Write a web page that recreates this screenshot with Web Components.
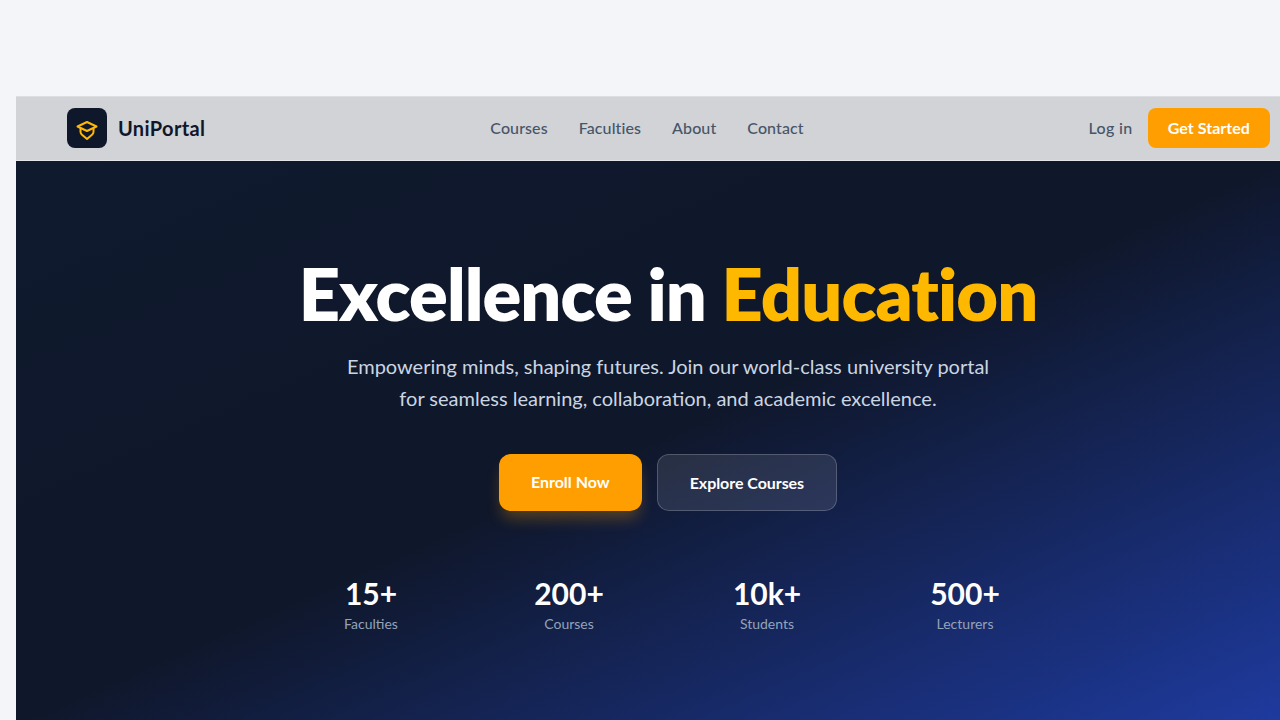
<!DOCTYPE html>
<html>
<head>
<meta charset="utf-8">
<title>UniPortal</title>
<style>
    html, body {
        margin: 0;
        height: 100%;
        overflow: hidden;
        background: #f3f5f9;
        font-family: "Lato", "Open Sans", sans-serif;
    }
    body {
        padding: 96px 0 0 16px;
        box-sizing: border-box;
    }
</style>
</head>
<body>
<uni-page>
    <site-nav></site-nav>
    <hero-section>
        <stat-item value="15+" label="Faculties"></stat-item>
        <stat-item value="200+" label="Courses"></stat-item>
        <stat-item value="10k+" label="Students"></stat-item>
        <stat-item value="500+" label="Lecturers"></stat-item>
    </hero-section>
</uni-page>
<script>
class UniPage extends HTMLElement {
    constructor() {
        super();
        this._shadowRoot = this.attachShadow({mode: 'open'});
        this._shadowRoot.innerHTML = `
            <style>
                :host {
                    display: flex;
                    flex-direction: column;
                    width: 1264px;
                    height: 624px;
                }
            </style>
            <slot></slot>
        `;
    }
}

class SiteNav extends HTMLElement {
    constructor() {
        super();
        this._shadowRoot = this.attachShadow({mode: 'open'});
        this._shadowRoot.innerHTML = `
            <style>
                * { box-sizing: border-box; }
                :host {
                    box-sizing: border-box;
                    display: grid;
                    grid-template-columns: 1fr auto 1fr;
                    align-items: center;
                    height: 65px;
                    padding: 0 10px 1px 51px;
                    background: #d1d3d7;
                    border-top: 1px solid #dcdee2;
                    border-bottom: 1px solid #e2e4e8;
                    flex: none;
                }
                .brand { display: flex; align-items: center; gap: 11px; }
                .logo {
                    width: 40px;
                    height: 40px;
                    border-radius: 8px;
                    background: #0f172a;
                    display: flex;
                    align-items: center;
                    justify-content: center;
                }
                .name { font-size: 20px; font-weight: 700; color: #0f172a; letter-spacing: .35px; padding-bottom: 1px; }
                nav { display: flex; gap: 31px; margin-left: -43px; }
                a { font-size: 16px; font-weight: 500; color: #475569; text-decoration: none; letter-spacing: .1px; padding-bottom: 2px; }
                .actions { display: flex; justify-content: flex-end; align-items: center; gap: 15px; }
                .actions a { letter-spacing: .35px; }
                .cta {
                    height: 40px;
                    padding: 0 20px 2px;
                    display: flex;
                    align-items: center;
                    border-radius: 8px;
                    background: #ff9e00;
                    color: #fff;
                    font-size: 16px;
                    font-weight: 700;
                    letter-spacing: .05px;
                }
            </style>
            <div class="brand">
                <div class="logo">
                    <svg width="24" height="24" viewBox="0 0 24 24" fill="none" stroke="#ffb800" stroke-width="2" stroke-linecap="round" stroke-linejoin="round" overflow="visible">
                        <path d="M2.5 10.5 12 6l9.5 4.5L12 15z"/>
                        <path d="M5.5 12.5v3.2c0 1.3.6 2.2 1.5 3L12 23l5-4.3c.9-.8 1.5-1.7 1.5-3v-3.2"/>
                    </svg>
                </div>
                <span class="name">UniPortal</span>
            </div>
            <nav>
                <a href="#">Courses</a>
                <a href="#">Faculties</a>
                <a href="#">About</a>
                <a href="#">Contact</a>
            </nav>
            <div class="actions">
                <a href="#">Log in</a>
                <div class="cta">Get Started</div>
            </div>
        `;
    }
}

class HeroSection extends HTMLElement {
    constructor() {
        super();
        this._shadowRoot = this.attachShadow({mode: 'open'});
        this._shadowRoot.innerHTML = `
            <style>
                * { box-sizing: border-box; margin: 0; }
                :host {
                    display: flex;
                    flex-direction: column;
                    align-items: center;
                    flex: 1;
                    padding-top: 94px;
                    padding-left: 40px;
                    background: linear-gradient(to bottom right, #0f1a2e 0%, #0f172a 50%, #1e3a9e 100%);
                }
                h1 {
                    font-size: 72px;
                    font-weight: 800;
                    line-height: 76px;
                    color: #fff;
                    letter-spacing: -.93px;
                }
                h1 span { color: #ffb800; }
                p {
                    margin-top: 19px;
                    width: 672px;
                    text-align: center;
                    font-size: 20px;
                    line-height: 32px;
                    color: #cbd5e1;
                }
                .buttons { display: flex; gap: 15px; margin-top: 40px; }
                .btn {
                    height: 57px;
                    display: flex;
                    align-items: center;
                    border-radius: 12px;
                    color: #fff;
                    font-size: 16px;
                    font-weight: 700;
                    padding: 0 32px;
                }
                .primary { background: #ff9e00; box-shadow: 0 10px 15px -3px rgba(255,158,0,.3); padding-bottom: 2px; }
                .secondary { background: rgba(255,255,255,.1); border: 1px solid rgba(255,255,255,.2); letter-spacing: -.05px; }
                .stats {
                    display: grid;
                    grid-template-columns: repeat(4, 150px);
                    column-gap: 48px;
                    margin-top: 65px;
                }
            </style>
            <h1>Excellence in <span>Education</span></h1>
            <p>Empowering minds, shaping futures. Join our world-class university portal for seamless learning, collaboration, and academic excellence.</p>
            <div class="buttons">
                <div class="btn primary">Enroll Now</div>
                <div class="btn secondary">Explore Courses</div>
            </div>
            <div class="stats"><slot></slot></div>
        `;
    }
}

class StatItem extends HTMLElement {
    constructor() {
        super();
        this._shadowRoot = this.attachShadow({mode: 'open'});
    }

    connectedCallback() {
        this._shadowRoot.innerHTML = `
            <style>
                :host { display: block; text-align: center; }
                .value { font-size: 30px; font-weight: 700; line-height: 34px; color: #fff; }
                .label { font-size: 14px; line-height: 20px; color: #94a3b8; margin-top: 4px; }
            </style>
            <div class="value">${this.getAttribute('value')}</div>
            <div class="label">${this.getAttribute('label')}</div>
        `;
    }
}

customElements.define('uni-page', UniPage);
customElements.define('site-nav', SiteNav);
customElements.define('hero-section', HeroSection);
customElements.define('stat-item', StatItem);
</script>
</body>
</html>
